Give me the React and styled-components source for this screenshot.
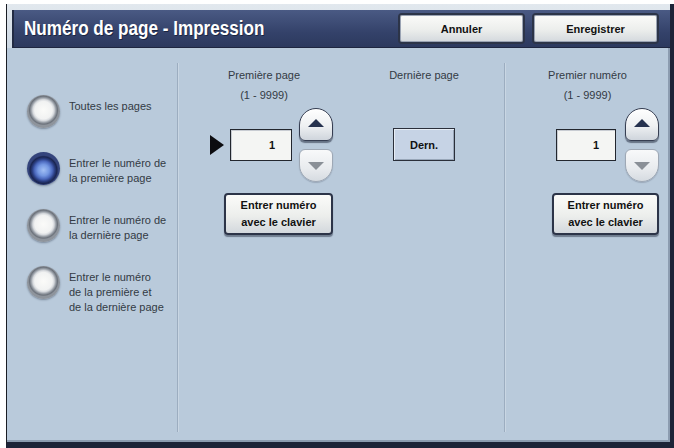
import styled, { createGlobalStyle, css } from 'styled-components';

const GlobalStyle = createGlobalStyle`
    html, body {
        margin: 0;
        padding: 0;
        background: #ffffff;
    }
    * {
        box-sizing: border-box;
    }
`;

const Screen = styled.div`
    width: 674px;
    height: 448px;
    padding: 4px 0 0 6px;
    background: #ffffff;
    font-family: "Liberation Sans", Arial, sans-serif;
`;

const Frame = styled.div`
    width: 668px;
    height: 444px;
    display: flex;
    flex-direction: column;
    background: #b9cadb;
    border-left: 1px solid #1a1d24;
    border-right: 4px solid #1d2438;
    border-bottom: 6px solid #1d2438;
    box-shadow: inset -2px -2px 0 #8c9cb0;
`;

const TopStrip = styled.div`
    padding: 6px 0 0 5px;
    background: linear-gradient(#e2e8ee, #cdd8e3);
`;

const Header = styled.header`
    height: 38px;
    display: flex;
    align-items: center;
    padding: 0 11px 0 10px;
    background: linear-gradient(#4a5a84, #34426a 60%, #2c395e);
    border-left: 2px solid #222b44;
    border-bottom: 1px solid #1e2640;
`;

const TitleBox = styled.div`
    flex: 1;
    overflow: hidden;
`;

const Title = styled.h1`
    margin: 0;
    display: inline-block;
    color: #ffffff;
    font-family: "Liberation Sans", Arial, sans-serif;
    font-weight: bold;
    font-size: 20px;
    white-space: nowrap;
    transform: scaleX(0.855);
    transform-origin: left center;
    text-shadow: 1px 1px 0 rgba(10, 16, 36, 0.6);
`;

const raisedButton = css`
    display: flex;
    align-items: center;
    justify-content: center;
    text-align: center;
    color: #111;
    font-family: "Liberation Sans", Arial, sans-serif;
    font-weight: bold;
    font-size: 11px;
    background: linear-gradient(#fbfbf9, #eceeec 55%, #d3d8dd);
    border: 2px solid #2c3448;
    border-radius: 4px;
    box-shadow: 0 2px 1px rgba(20, 28, 48, 0.45);
    cursor: pointer;
`;

const HeadButton = styled.button`
    ${raisedButton};
    width: 127px;
    height: 31px;
    margin-left: ${({ $gap }) => $gap || 0}px;
    box-shadow: inset 0 0 0 1px #9aa3b3;
`;

const Body = styled.main`
    flex: 1;
    display: flex;
    padding: 15px 0 10px;
`;

const Column = styled.section`
    width: ${({ $width }) => $width}px;
    display: flex;
    border-left: ${({ $divider }) => ($divider ? '1px solid #9cadc0' : 'none')};
    box-shadow: ${({ $divider }) => ($divider ? 'inset 1px 0 0 #c9d6e3' : 'none')};
`;

const OptionList = styled.div`
    padding: 32px 0 0 20px;
    display: flex;
    flex-direction: column;
`;

const Option = styled.label`
    height: 57px;
    display: flex;
    align-items: flex-start;
    gap: 9px;
    cursor: pointer;
`;

const Radio = styled.span`
    flex: none;
    width: 33px;
    height: 33px;
    border-radius: 50%;
    box-shadow: 0 1px 2px rgba(30, 40, 60, 0.4);
    background: ${({ $checked }) =>
        $checked
            ? 'radial-gradient(circle closest-side at 50% 55%, #a2bff4 0%, #7497e2 38%, #4b68bd 60%, #2a3d80 76%, #1a2550 90%, #34447c 100%)'
            : 'radial-gradient(circle closest-side at 50% 46%, #fbfbf9 0%, #f1f2f2 58%, #d6d9dd 70%, #9ba1a9 81%, #6c727b 92%, #8e949c 100%)'};
`;

const OptionText = styled.span`
    padding-top: 4px;
    font-size: 11px;
    line-height: 15px;
    color: #333a44;
`;

const SubColumn = styled.div`
    width: ${({ $width }) => $width}px;
    display: flex;
    flex-direction: column;
    align-items: center;
    padding-top: 2px;
`;

const Caption = styled.div`
    height: 42px;
    text-align: center;
    font-size: 11px;
    line-height: 20px;
    color: #333a44;
`;

const Controls = styled.div`
    display: flex;
    flex-direction: column;
    align-items: ${({ $align }) => $align || 'flex-end'};
    align-self: ${({ $align }) => ($align ? 'center' : 'flex-end')};
    margin-right: ${({ $right }) => $right || 0}px;
    gap: 11px;
`;

const SpinRow = styled.div`
    height: 75px;
    display: flex;
    align-items: center;
`;

const Marker = styled.span`
    width: 0;
    height: 0;
    margin-right: 6px;
    border-top: 10px solid transparent;
    border-bottom: 10px solid transparent;
    border-left: 14px solid #0c0c10;
`;

const NumberBox = styled.div`
    width: ${({ $width }) => $width}px;
    height: 32px;
    display: flex;
    align-items: center;
    justify-content: flex-end;
    padding-right: 16px;
    font-weight: bold;
    font-size: 11px;
    color: #111;
    background: #f4f5f3;
    border: 1px solid #22262e;
    box-shadow: inset 1px 1px 0 #c8ccd2;
`;

const ArrowStack = styled.div`
    margin-left: ${({ $gap }) => $gap}px;
    display: flex;
    flex-direction: column;
    gap: 8px;
`;

const ArrowButton = styled.button`
    width: 34px;
    height: 33px;
    padding: 0;
    display: flex;
    align-items: center;
    justify-content: center;
    cursor: pointer;
    ${({ $down }) =>
        $down
            ? css`
                  border: 1.5px solid #9ea8b5;
                  border-radius: 6px 6px 17px 17px;
                  background: linear-gradient(#f8f9fa, #e8ebee 60%, #d6dbe1);
                  box-shadow: 0 1px 1px rgba(60, 70, 90, 0.25);
              `
            : css`
                  border: 1.5px solid #363e52;
                  border-radius: 17px 17px 6px 6px;
                  background: linear-gradient(#ffffff, #eef0f2 55%, #cfd5dc);
                  box-shadow: 0 2px 1px rgba(20, 28, 48, 0.5);
              `}
`;

const Triangle = styled.span`
    width: 0;
    height: 0;
    border-left: 8px solid transparent;
    border-right: 8px solid transparent;
    ${({ $down }) =>
        $down
            ? css`
                  border-top: 8px solid #8a9097;
                  margin-top: 2px;
              `
            : css`
                  border-bottom: 8px solid #26324f;
                  margin-top: -2px;
              `}
`;

const KeypadButton = styled.button`
    ${raisedButton};
    width: ${({ $width }) => $width}px;
    height: 42px;
    line-height: 17px;
    padding: 0;
`;

const LastBox = styled.div`
    width: 62px;
    height: 33px;
    display: flex;
    align-items: center;
    justify-content: center;
    font-weight: bold;
    font-size: 11px;
    color: #111;
    background: #c6d3e5;
    border: 1px solid #2a2f3a;
    box-shadow: inset 1px 1px 0 #e6edf5, inset -1px -1px 0 #98a6b8;
`;

const options = [
    { text: ['Toutes les pages'], checked: false },
    { text: ['Entrer le numéro de', 'la première page'], checked: true },
    { text: ['Entrer le numéro de', 'la dernière page'], checked: false },
    { text: ['Entrer le numéro', 'de la première et', 'de la dernière page'], checked: false },
];

const Spinner = ({ boxWidth, gap, marker }) => (
    <SpinRow>
        {marker && <Marker />}
        <NumberBox $width={boxWidth}>1</NumberBox>
        <ArrowStack $gap={gap}>
            <ArrowButton aria-label="plus">
                <Triangle />
            </ArrowButton>
            <ArrowButton $down aria-label="moins">
                <Triangle $down />
            </ArrowButton>
        </ArrowStack>
    </SpinRow>
);

const Keypad = ({ width }) => (
    <KeypadButton $width={width}>
        Entrer numéro
        <br />
        avec le clavier
    </KeypadButton>
);

const App = () => (
    <>
        <GlobalStyle />
        <Screen>
            <Frame>
                <TopStrip>
                    <Header>
                        <TitleBox>
                            <Title>Numéro de page - Impression</Title>
                        </TitleBox>
                        <HeadButton>Annuler</HeadButton>
                        <HeadButton $gap={7}>Enregistrer</HeadButton>
                    </Header>
                </TopStrip>
                <Body>
                    <Column $width={170}>
                        <OptionList>
                            {options.map(({ text, checked }) => (
                                <Option key={text.join(' ')}>
                                    <Radio $checked={checked} />
                                    <OptionText>
                                        {text.map(line => (
                                            <div key={line}>{line}</div>
                                        ))}
                                    </OptionText>
                                </Option>
                            ))}
                        </OptionList>
                    </Column>
                    <Column $width={327} $divider>
                        <SubColumn $width={172}>
                            <Caption>
                                Première page
                                <br />
                                (1 - 9999)
                            </Caption>
                            <Controls $right={17}>
                                <Spinner boxWidth={62} gap={7} marker />
                                <Keypad width={109} />
                            </Controls>
                        </SubColumn>
                        <SubColumn $width={148}>
                            <Caption>Dernière page</Caption>
                            <Controls $align="center">
                                <SpinRow>
                                    <LastBox>Dern.</LastBox>
                                </SpinRow>
                            </Controls>
                        </SubColumn>
                    </Column>
                    <Column $width={166} $divider>
                        <SubColumn $width={165}>
                            <Caption>
                                Premier numéro
                                <br />
                                (1 - 9999)
                            </Caption>
                            <Controls $right={11}>
                                <Spinner boxWidth={60} gap={9} />
                                <Keypad width={107} />
                            </Controls>
                        </SubColumn>
                    </Column>
                </Body>
            </Frame>
        </Screen>
    </>
);

export default App;
